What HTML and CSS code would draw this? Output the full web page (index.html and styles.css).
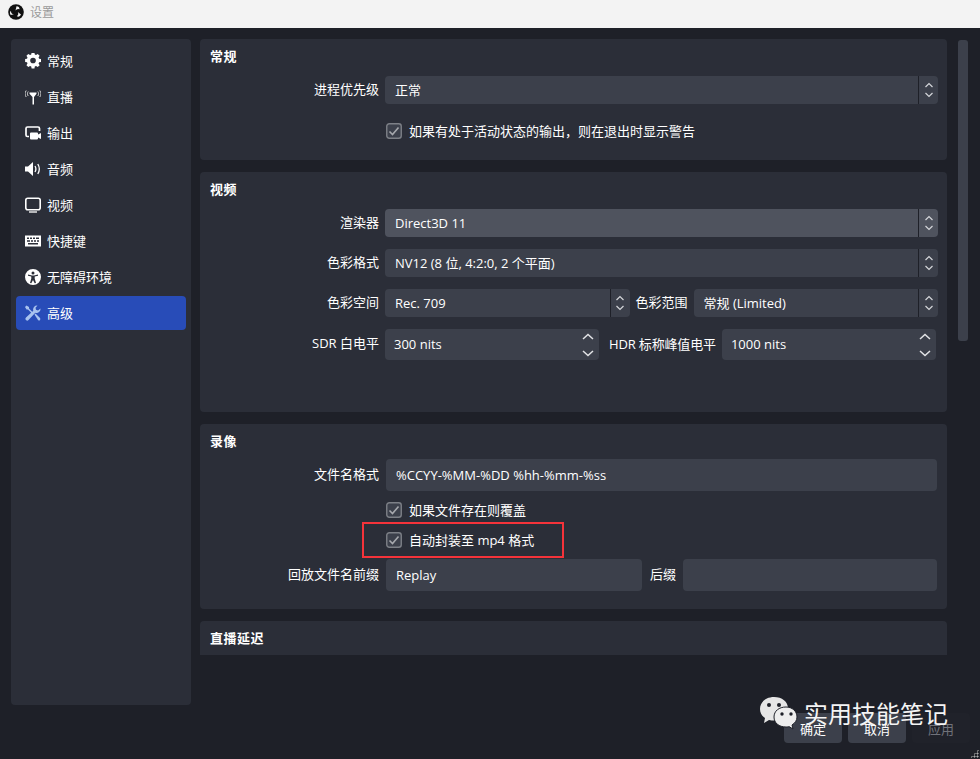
FILE: index.html
```html
<!DOCTYPE html>
<html lang="zh">
<head>
<meta charset="utf-8">
<title>设置</title>
<link rel="stylesheet" href="styles.css">
</head>
<body>
<svg width="0" height="0" class="defs">
  <defs>
    <symbol id="updown" viewBox="0 0 12 20"><path d="M2.500 7 6 3.500 9.500 7M2.500 13 6 16.500 9.500 13" fill="none" stroke="#d4d6da" stroke-width="1.200"/></symbol>
    <symbol id="updown-wide" viewBox="0 0 14 26"><path d="M2 7 7 2.500 12 7M2 19 7 23.500 12 19" fill="none" stroke="#e2e3e6" stroke-width="1.500"/></symbol>
    <symbol id="check" viewBox="0 0 16 16"><rect x=".75" y=".75" width="14.500" height="14.500" rx="2.500" fill="#3c404b" stroke="#7d8087" stroke-width="1.400"/><path d="M3.500 8.500 6.500 11.500 12.500 4.500" fill="none" stroke="#a6a8ad" stroke-width="1.600"/></symbol>
  </defs>
</svg>
<div class="window">
  <header class="titlebar">
    <svg class="obs" viewBox="0 0 16 16"><circle cx="8" cy="8" r="7.800" fill="#111"/><path d="M8.500 2.300a3 3 0 0 1 3 3 3.300 3.300 0 0 0-4 1.200zM2.800 11a3.200 3.200 0 0 1 .2-4.300 3.300 3.300 0 0 0 3 3.500zM13 10.500a3.200 3.200 0 0 1-4.200 1.800 3.300 3.300 0 0 0 1-4.200z" fill="#f2f2f2"/></svg>
    <span class="title">设置</span>
  </header>
  <div class="body">
    <nav class="sidebar">
      <a class="item"><svg class="ic" viewBox="0 0 16 16"><path fill="#fff" fill-rule="evenodd" d="M6.500 0h3l.4 2.100 1.300.6L13 1.500l2 2-1.100 1.900.6 1.300 2.100.3v3l-2.100.4-.6 1.300 1.200 1.800-2.100 2-1.800-1.100-1.300.5-.4 2.100h-3l-.4-2.100-1.300-.5L3 15.500l-2-2 1.100-1.800-.5-1.300L-.4 10V7l2-.3.500-1.300L1 3.500l2-2 1.800 1.200 1.300-.6zM8 5.500a3 3 0 1 0 0 6 3 3 0 0 0 0-6z" transform="translate(.5 -.5) scale(.94)"/></svg><span>常规</span></a>
      <a class="item"><svg class="ic" viewBox="0 0 16 16"><path fill="#fff" d="M4.500 3.500h7v1.300L9 8v7.500H7.500V8L4.500 4.800z"/><path fill="none" stroke="#d0d0d0" d="M3.200 2.500c-1 1.500-1 3 0 4.500M1.200 1.500c-1.500 2.300-1.500 4.300 0 6.500M12.800 2.500c1 1.500 1 3 0 4.500M14.800 1.500c1.500 2.300 1.500 4.300 0 6.500"/></svg><span>直播</span></a>
      <a class="item"><svg class="ic" viewBox="0 0 16 16"><path fill="none" stroke="#fff" stroke-width="1.700" d="M4 11.500H2.500Q1 11.500 1 10V3.500Q1 2 2.500 2H13q1.500 0 1.500 1.500V6"/><path fill="#fff" d="M6 7.500h6q1 0 1 1v1l3-1.500v6l-3-1.500v1q0 1-1 1H6q-1 0-1-1V8.500q0-1 1-1z"/></svg><span>输出</span></a>
      <a class="item"><svg class="ic" viewBox="0 0 16 16"><path fill="#fff" d="M0 5.500h3L8 1v14l-5-4.500H0z"/><path fill="none" stroke="#fff" stroke-width="1.300" d="M10 5c1.200 2 1.200 4 0 6M12.800 3c2 3.300 2 6.700 0 10"/></svg><span>音频</span></a>
      <a class="item"><svg class="ic" viewBox="0 0 16 16"><rect x=".8" y="1.300" width="14.400" height="11.400" rx="2" fill="none" stroke="#fff" stroke-width="1.600"/><path stroke="#fff" stroke-width="1.300" d="M4 15h8"/></svg><span>视频</span></a>
      <a class="item"><svg class="ic" viewBox="0 0 16 16"><path fill="#fff" fill-rule="evenodd" d="M0 2.500h16v11H0zM2 4.500v1.500h2V4.500zM5 4.500v1.500h2V4.500zM8 4.500v1.500h2V4.500zM11 4.500v1.500h3V4.500zM2 7.200v1.500h3V7.200zM6 7.200v1.500h2V7.200zM9 7.200v1.500h2V7.200zM12 7.200v1.500h2V7.200zM3 10v1.500h10V10z"/></svg><span>快捷键</span></a>
      <a class="item"><svg class="ic" viewBox="0 0 16 16"><path fill="#fff" fill-rule="evenodd" d="M8 0a8 8 0 1 1 0 16A8 8 0 0 1 8 0zM8 2.500a1.500 1.500 0 1 0 0 3 1.500 1.500 0 0 0 0-3zM3 5.500v1.300l3.300.8v2L5 14l1.300.3L8 11l1.700 3.300L11 14l-1.300-4.400v-2l3.300-.8V5.500L9 6.500H7z"/></svg><span>无障碍环境</span></a>
      <a class="item active"><svg class="ic" viewBox="0 0 16 16"><path fill="#a9c3ef" d="M1.500.5 4 2v1.500l3.500 3.500-1 1L3 4.500H1.500L0 2zM15.500 3.500a4 4 0 0 1-5.200 4.200L3.500 15a1.500 1.500 0 0 1-2.500-2.500L8.300 5.700A4 4 0 0 1 12.500.500L10.500 2.800l.5 2 2 .6z"/><path fill="#a9c3ef" d="M9.500 9.500l1-1 4.500 4.500q.7 1 0 2t-2 0z"/></svg><span>高级</span></a>
    </nav>
    <main class="content">
      <section class="group general">
        <h2>常规</h2>
        <div class="row first"><label>进程优先级</label><div class="combo"><span>正常</span><i><svg><use href="#updown"/></svg></i></div></div>
        <div class="row check gap-general"><svg class="cb"><use href="#check"/></svg><span>如果有处于活动状态的输出，则在退出时显示警告</span></div>
      </section>
      <section class="group video">
        <h2>视频</h2>
        <div class="row first"><label>渲染器</label><div class="combo hover"><span>Direct3D 11</span><i><svg><use href="#updown"/></svg></i></div></div>
        <div class="row"><label>色彩格式</label><div class="combo"><span>NV12 (8 位, 4:2:0, 2 个平面)</span><i><svg><use href="#updown"/></svg></i></div></div>
        <div class="row"><label>色彩空间</label><div class="combo"><span>Rec. 709</span><i><svg><use href="#updown"/></svg></i></div><label class="mid">色彩范围</label><div class="combo"><span>常规 (Limited)</span><i><svg><use href="#updown"/></svg></i></div></div>
        <div class="row spin-row"><label>SDR 白电平</label><div class="spin sdr"><span>300 nits</span><svg><use href="#updown-wide"/></svg></div><label class="mid hdr">HDR 标称峰值电平</label><div class="spin"><span>1000 nits</span><svg><use href="#updown-wide"/></svg></div></div>
      </section>
      <section class="group record">
        <h2>录像</h2>
        <div class="row first-rec"><label>文件名格式</label><div class="field"><span>%CCYY-%MM-%DD %hh-%mm-%ss</span></div></div>
        <div class="row check overwrite"><svg class="cb"><use href="#check"/></svg><span>如果文件存在则覆盖</span></div>
        <div class="row check remux"><svg class="cb"><use href="#check"/></svg><span>自动封装至 mp4 格式</span><b class="mark"></b></div>
        <div class="row replay"><label>回放文件名前缀</label><div class="field prefix"><span>Replay</span></div><label class="suffix">后缀</label><div class="field"></div></div>
      </section>
      <section class="group delay"><h2>直播延迟</h2></section>
    </main>
    <div class="scrollbar"></div>
  </div>
  <footer class="buttons">
    <button class="btn">确定</button><button class="btn">取消</button><button class="btn off">应用</button>
  </footer>
  <div class="watermark">
    <svg viewBox="0 0 40 34"><path fill="#e6e6e6" d="M15 1C7 1 1 6 1 13c0 4 2 7 5 9l-1 5 5-3c2 .5 3 .6 5 .6 7 0 14-5 14-12S23 1 15 1z"/><circle cx="10" cy="9" r="2" fill="#1e2028"/><circle cx="20" cy="9" r="2" fill="#1e2028"/><path fill="#eee" stroke="#1e2028" d="M27 11c-7 0-12 4-12 10s5 10 12 10c1.500 0 2-.1 3-.4l4 2.400-1-4c3-2 5-4.500 5-8 0-6-5-10-11-10z"/><circle cx="23" cy="18" r="1.700" fill="#1e2028"/><circle cx="32" cy="18" r="1.700" fill="#1e2028"/></svg>
    <span>实用技能笔记</span>
  </div>
  <div class="grip"></div>
</div>
</body>
</html>
```
FILE: styles.css
```css
* { box-sizing: border-box; }
html, body { margin: 0; height: 100%; }
.defs { position: absolute; }
body { background: #1e2028; font-family: "Open Sans", "Noto Sans CJK SC", sans-serif; font-size: 13px; line-height: 16px; color: #fff; overflow: hidden; }
.window { position: relative; width: 980px; height: 759px; display: flex; flex-direction: column; }
.titlebar { height: 28px; background: #f3f3f3; display: flex; align-items: center; padding: 0 0 4px 8px; flex: none; }
.obs { width: 16px; height: 16px; }
.title { margin-left: 6px; font-size: 12px; color: #9a9a9a; font-family: "Noto Sans CJK SC", sans-serif; }
.body { height: 677px; padding: 11px 0 0 11px; display: flex; flex: none; align-items: flex-start; }
.sidebar { width: 180px; height: 666px; background: #2b2e38; border-radius: 4px; padding: 5px; flex: none; display: flex; flex-direction: column; gap: 2px; }
.item { height: 34px; display: flex; align-items: center; padding: 0 0 0 9px; border-radius: 4px; font-family: "Noto Sans CJK SC", sans-serif; font-size: 13px; }
.item span { margin-top: -1px; }
.item.active { background: #284cb8; }
.ic { width: 16px; height: 16px; margin-right: 6px; flex: none; }
.content { width: 747px; height: 616px; margin-left: 9px; overflow: hidden; display: flex; flex-direction: column; gap: 12px; flex: none; }
.group { background: #2b2e38; border-radius: 4px; padding: 10px 9px 10px 10px; flex: none; position: relative; }
.general { height: 121px; }
.video { height: 240px; }
.record { height: 185px; padding-right: 10px; }
.delay { height: 60px; }
h2 { margin: 0; font: 700 13px/15px "Noto Sans CJK SC", sans-serif; letter-spacing: .5px; height: 15px; position: relative; top: -1px; }
.row { display: flex; align-items: center; height: 28px; margin-top: 12px; }
.row > label { width: 175px; padding: 0 6px 3px 0; text-align: right; flex: none; white-space: nowrap; }
.row > label.mid { width: auto; padding: 0 6px 2px 6px; }
.row > label.hdr { padding: 0 6px 2px 10px; letter-spacing: -.15px; }
.combo { flex: 1 1 0; height: 28px; background: #3c404b; border-radius: 4px; display: flex; align-items: center; padding-left: 10px; }
.combo.hover { background: #4f535e; }
.combo span { flex: 1; padding-bottom: 1px; }
.combo i { width: 20px; height: 28px; border-left: 1px solid #1e2028; display: flex; align-items: center; justify-content: center; flex: none; }
.combo svg { width: 12px; height: 20px; }
.spin { flex: 1 1 0; height: 31px; margin-right: 2px; background: #3c404b; border-radius: 4px; display: flex; align-items: center; justify-content: space-between; padding: 0 4px 0 9px; }
.spin span { padding-bottom: 1px; }
.spin svg { width: 14px; height: 26px; flex: none; }
.spin-row { height: 31px; }
.spin.sdr { flex: 0 0 214px; margin-right: 0; }
.check { padding-left: 176px; height: 20px; }
.check span { padding-bottom: 0; }
.cb { width: 16px; height: 16px; margin-right: 7px; flex: none; }
.gap-general { margin-top: 17px; }
.first-rec { height: 32px; margin-top: 10px; }
.field { flex: 1 1 0; height: 100%; margin-left: 1px; background: #3c404b; border-radius: 4px; display: flex; align-items: center; padding: 0 0 0 10px; }
.overwrite { margin-top: 9px; }
.remux { margin-top: 10px; position: relative; }
.mark { position: absolute; left: 152px; top: -8px; width: 202px; height: 36px; border: 2px solid #f5333a; }
.replay { height: 32px; margin-top: 9px; }
.prefix { flex: 0 0 256px; }
.row > label.suffix { width: auto; padding: 0 6px 2px 8px; }
.scrollbar { width: 10px; height: 301px; margin: 1px 0 0 11px; background: #3c404b; border-radius: 3px; flex: none; }
.buttons { flex: 1; display: flex; justify-content: flex-end; gap: 6px; padding: 8px 10px 0 0; align-items: flex-start; }
.btn { width: 58px; height: 30px; border: 0; border-radius: 4px; background: #3c404b; color: #fff; font: 13px "Noto Sans CJK SC", sans-serif; padding: 0; }
.btn.off { background: #20222a; color: #70727a; }
.watermark { position: absolute; left: 758px; top: 695px; display: flex; align-items: center; font: 24px "Noto Sans CJK SC", sans-serif; color: #f4f4f4; }
.watermark svg { width: 42px; height: 34px; margin-right: 4px; }
.grip { position: absolute; right: 1px; bottom: 1px; width: 9px; height: 9px; background: radial-gradient(circle, #aaa 45%, transparent 50%) 0 0 / 3px 3px; clip-path: polygon(100% 0, 100% 100%, 0 100%); }
```
